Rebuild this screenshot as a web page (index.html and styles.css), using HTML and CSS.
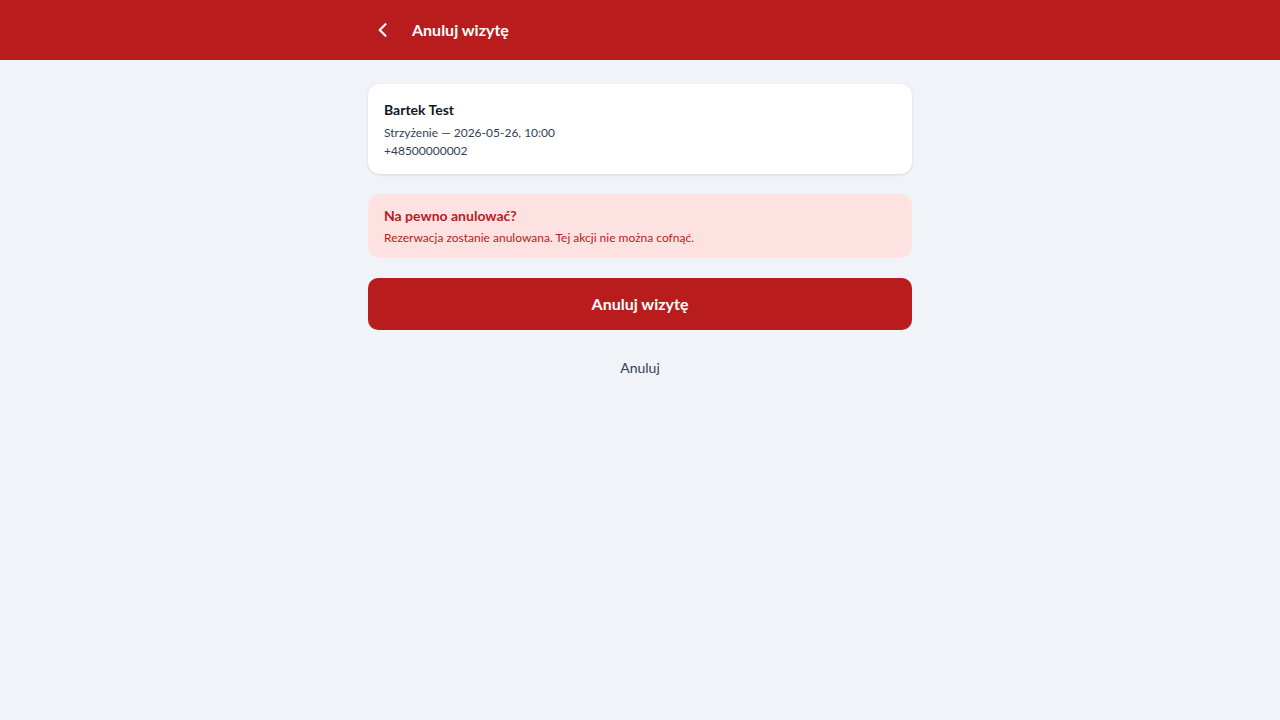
FILE: index.html
```html
<!DOCTYPE html>
<html lang="pl">
<head>
  <meta charset="UTF-8">
  <meta name="viewport" content="width=device-width, initial-scale=1.0">
  <title>Anuluj wizytę</title>
  <link rel="stylesheet" href="styles.css">
</head>
<body>
  <header class="topbar">
    <div class="topbar-inner">
      <a href="#" class="back-btn" aria-label="Wstecz">
        <svg width="20" height="20" viewBox="0 0 24 24" fill="none" stroke="currentColor" stroke-width="2.6" stroke-linecap="round" stroke-linejoin="round">
          <path d="M15 5l-7 7 7 7"/>
        </svg>
      </a>
      <h1 class="topbar-title">Anuluj wizytę</h1>
    </div>
  </header>

  <main class="container">
    <div class="card">
      <div class="client-name">Bartek Test</div>
      <div class="client-line">Strzyżenie — 2026-05-26, 10:00</div>
      <div class="client-line">+48500000002</div>
    </div>

    <div class="warning">
      <div class="warning-title">Na pewno anulować?</div>
      <div class="warning-text">Rezerwacja zostanie anulowana. Tej akcji nie można cofnąć.</div>
    </div>

    <button class="danger-btn">Anuluj wizytę</button>
    <a href="#" class="cancel-link">Anuluj</a>
  </main>
</body>
</html>
```

FILE: styles.css
```css
html {
  background-color: #f0f3f8;
}

body {
  font-family: Lato, 'Noto Sans', sans-serif;
  margin: 0;
  color: #334155;
}

.topbar {
  background: #b91c1c;
  height: 60px;
  color: #fff;
}

.topbar-inner {
  max-width: 544px;
  margin: 0 auto;
  height: 100%;
  display: flex;
  align-items: center;
  gap: 14px;
}

.back-btn {
  color: #fff;
  display: flex;
  align-items: center;
  justify-content: center;
  width: 30px;
  height: 30px;
}

.topbar-title {
  margin: 0 0 2px;
  font-size: 16px;
  font-weight: 700;
}

.container {
  max-width: 544px;
  margin: 0 auto;
  padding-top: 24px;
  display: flex;
  flex-direction: column;
}

.card {
  background: #fff;
  border-radius: 12px;
  padding: 16px 16px 14px;
  box-shadow: 0 1px 3px rgba(15, 23, 42, 0.12);
  margin-bottom: 20px;
}

.client-name {
  font-size: 14px;
  line-height: 19px;
  font-weight: 700;
  color: #0f172a;
  margin-bottom: 5px;
}

.client-line {
  font-size: 12px;
  line-height: 18px;
}

.warning {
  background: #fee2e2;
  border-radius: 12px;
  padding: 12px 16px 12px;
  margin-bottom: 20px;
}

.warning-title {
  font-size: 14px;
  line-height: 19px;
  font-weight: 700;
  color: #b91c1c;
  margin-bottom: 5px;
}

.warning-text {
  font-size: 12px;
  line-height: 16px;
  color: #b91c1c;
}

.danger-btn {
  height: 52px;
  padding: 0 0 2px;
  border: none;
  border-radius: 10px;
  background: #b91c1c;
  color: #fff;
  font-family: inherit;
  font-size: 16px;
  font-weight: 700;
  cursor: pointer;
}

.cancel-link {
  align-self: center;
  margin-top: 28px;
  font-size: 14px;
  line-height: 19px;
  color: #334155;
  text-decoration: none;
}
```
